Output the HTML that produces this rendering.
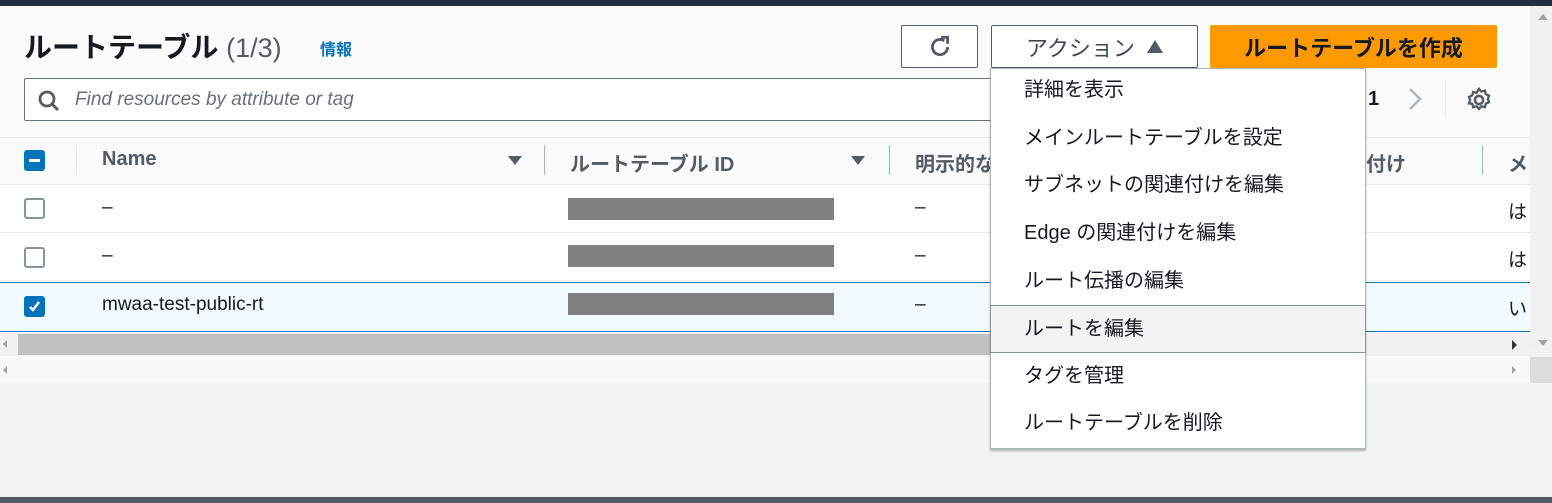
<!DOCTYPE html>
<html><head><meta charset="utf-8"><style>
*{box-sizing:border-box;margin:0;padding:0}
body{width:1552px;height:503px;overflow:hidden;background:#f2f3f3;font-family:"Liberation Sans","Noto Sans CJK JP",sans-serif;color:#16191f;position:relative}
.abs{position:absolute}
.top{left:0;top:0;width:1552px;height:6px;background:#232f3e}
.panel{left:0;top:6px;width:1530px;height:377px;background:#fff}
.head{left:0;top:6px;width:1530px;height:131px;background:#fbfbfb}
h1{position:absolute;left:24px;top:26px;font-size:28px;font-weight:bold;letter-spacing:0}
h1 span{font-weight:normal;color:#545b64;font-size:27px}
.info{left:320px;top:36px;color:#0073bb;font-weight:bold;font-size:16px}
.btn{border:1px solid #545b64;border-radius:2px;background:#fff;height:43px;top:25px;display:flex;align-items:center;justify-content:center;font-size:22px;color:#414750}
.search{left:24px;top:78px;width:1000px;height:43px;border:1px solid #687078;border-radius:2px;background:#fff}
.search i{position:absolute;left:50px;top:10px;font-size:19px;color:#687078}
.th{left:0;top:137px;width:1530px;height:48px;background:#fafafa;border-top:1px solid #eaeded;border-bottom:1px solid #eaeded}
.tht{font-weight:bold;font-size:20px;color:#545b64;top:148px}
.sep{width:1px;height:30px;background:#aab7b8;top:145px}
.row{left:0;width:1530px;height:48px;border-bottom:1px solid #eaeded;background:#fff}
.cb{width:21px;height:21px;border:2px solid #879596;border-radius:3px;background:#fff;left:24px}
.txt{font-size:19px}
.red{left:568px;width:266px;height:22px;background:#808080}
.menu{left:990px;top:68px;width:376px;height:381px;background:#fff;border:1px solid #aab7b8;box-shadow:0 2px 2px rgba(0,0,0,.25)}
.mi{position:absolute;left:33px;font-size:20px;color:#16191f}
.tri{width:0;height:0;border-left:7px solid transparent;border-right:7px solid transparent;border-top:9px solid #545b64}
</style></head><body>
<div class="abs top"></div>
<div class="abs panel"></div>
<div class="abs head"></div>
<div class="abs" style="left:1530px;top:6px;width:22px;height:344px;background:#f1f1f1"></div>
<div class="abs" style="left:1538px;top:14px;width:0;height:0;border-left:5px solid transparent;border-right:5px solid transparent;border-bottom:6px solid #a3a3a3"></div>
<div class="abs" style="left:1538px;top:340px;width:0;height:0;border-left:5px solid transparent;border-right:5px solid transparent;border-top:6px solid #a3a3a3"></div>
<div class="abs" style="left:1530px;top:357px;width:22px;height:26px;background:#dcdcdc"></div>
<h1>ルートテーブル <span>(1/3)</span></h1>
<div class="abs info">情報</div>
<div class="abs btn" style="left:901px;width:77px"><svg width="26" height="26" viewBox="0 0 24 24"><path d="M19 12a7 7 0 1 1-3-5.7" fill="none" stroke="#545b64" stroke-width="2.6"/><path d="M13 3h6v6" fill="none" stroke="#545b64" stroke-width="2.6"/></svg></div>
<div class="abs btn" style="left:991px;width:207px">アクション&nbsp;&nbsp;<span style="display:inline-block;width:0;height:0;border-left:8px solid transparent;border-right:8px solid transparent;border-bottom:13px solid #545b64"></span></div>
<div class="abs btn" style="left:1210px;width:287px;background:#ff9900;border-color:#ff9900;color:#16191f;font-weight:bold">ルートテーブルを作成</div>
<div class="abs search"><svg style="position:absolute;left:12px;top:10px" width="24" height="24" viewBox="0 0 24 24"><circle cx="10" cy="10" r="7" fill="none" stroke="#545b64" stroke-width="2.8"/><path d="M15 15l6 6" stroke="#545b64" stroke-width="3"/></svg><i>Find resources by attribute or tag</i></div>
<div class="abs" style="left:1368px;top:88px;font-size:20px;font-weight:bold">1</div>
<svg class="abs" style="left:1405px;top:86px" width="20" height="26" viewBox="0 0 20 26"><path d="M5 3l10 10-10 10" fill="none" stroke="#aab7b8" stroke-width="2.5"/></svg>
<div class="abs" style="left:1445px;top:80px;width:1px;height:36px;background:#eaeded"></div>
<svg class="abs" style="left:1465px;top:86px" width="28" height="28" viewBox="0 0 24 24"><circle cx="12" cy="12" r="3.5" fill="none" stroke="#545b64" stroke-width="2.2"/><path d="M12 2.5l2 2.3 3-.8.8 3 2.8 1.3-1 2.8 1 2.8-2.8 1.3-.8 3-3-.8-2 2.3-2-2.3-3 .8-.8-3L3.4 15l1-2.8-1-2.8 2.8-1.3.8-3 3 .8z" fill="none" stroke="#545b64" stroke-width="2"/></svg>
<div class="abs th"></div>
<div class="abs cb" style="top:150px;background:#0073bb;border-color:#0073bb"><div style="position:absolute;left:3px;top:7px;width:11px;height:3px;background:#fff"></div></div>
<div class="abs" style="left:76px;top:145px;width:1px;height:30px;background:#eaeded"></div>
<div class="abs tht" style="left:102px">Name</div>
<div class="abs tri" style="left:508px;top:156px"></div>
<div class="abs sep" style="left:544px"></div>
<div class="abs tht" style="left:570px">ルートテーブル ID</div>
<div class="abs tri" style="left:851px;top:156px"></div>
<div class="abs sep" style="left:889px"></div>
<div class="abs tht" style="left:915px">明示的な</div>
<div class="abs tht" style="left:1366px">付け</div>
<div class="abs sep" style="left:1482px"></div>
<div class="abs tht" style="left:1508px">メ</div>
<div class="abs row" style="top:185px"></div>
<div class="abs cb" style="top:198px"></div>
<div class="abs txt" style="left:102px;top:197px">–</div>
<div class="abs red" style="top:198px"></div>
<div class="abs txt" style="left:915px;top:197px">–</div>
<div class="abs txt" style="left:1508px;top:197px">は</div>
<div class="abs row" style="top:233px"></div>
<div class="abs cb" style="top:247px"></div>
<div class="abs txt" style="left:102px;top:245px">–</div>
<div class="abs red" style="top:245px"></div>
<div class="abs txt" style="left:915px;top:245px">–</div>
<div class="abs txt" style="left:1508px;top:245px">は</div>
<div class="abs row" style="top:282px;height:50px;background:#f1faff;border-top:1px solid #0073bb;border-bottom:1px solid #0073bb"></div>
<div class="abs cb" style="top:296px;background:#0073bb;border-color:#0073bb"><svg style="position:absolute;left:1px;top:1px" width="15" height="15" viewBox="0 0 15 15"><path d="M3 8l3 3 6-8" fill="none" stroke="#fff" stroke-width="2.5"/></svg></div>
<div class="abs txt" style="left:102px;top:294px">mwaa-test-public-rt</div>
<div class="abs red" style="top:293px"></div>
<div class="abs txt" style="left:915px;top:294px">–</div>
<div class="abs txt" style="left:1508px;top:294px">い</div>
<div class="abs" style="left:0;top:333px;width:1530px;height:23px;background:#f1f1f1"></div>
<div class="abs" style="left:18px;top:334px;width:975px;height:21px;background:#c1c1c1"></div>
<div class="abs" style="left:3px;top:340px;border-top:4px solid transparent;border-bottom:4px solid transparent;border-right:4px solid #a3a3a3"></div>
<div class="abs" style="left:1512px;top:340px;border-top:5px solid transparent;border-bottom:5px solid transparent;border-left:5px solid #333"></div>
<div class="abs" style="left:0;top:356px;width:1530px;height:27px;background:#f9f9f9"></div>
<div class="abs" style="left:3px;top:366px;border-top:4px solid transparent;border-bottom:4px solid transparent;border-right:4px solid #a3a3a3"></div>
<div class="abs" style="left:1512px;top:366px;border-top:4px solid transparent;border-bottom:4px solid transparent;border-left:4px solid #a3a3a3"></div>
<div class="abs" style="left:0;top:497px;width:1552px;height:6px;background:#545b64"></div>
<div class="abs menu">
<div class="mi" style="top:4px">詳細を表示</div>
<div class="mi" style="top:52px">メインルートテーブルを設定</div>
<div class="mi" style="top:99px">サブネットの関連付けを編集</div>
<div class="mi" style="top:147px">Edge の関連付けを編集</div>
<div class="mi" style="top:195px">ルート伝播の編集</div>
<div style="position:absolute;left:-1px;top:236px;width:376px;height:48px;background:#f2f3f3;border:1px solid #879596"></div>
<div class="mi" style="top:243px">ルートを編集</div>
<div class="mi" style="top:290px">タグを管理</div>
<div class="mi" style="top:337px">ルートテーブルを削除</div>
</div>
</body></html>
